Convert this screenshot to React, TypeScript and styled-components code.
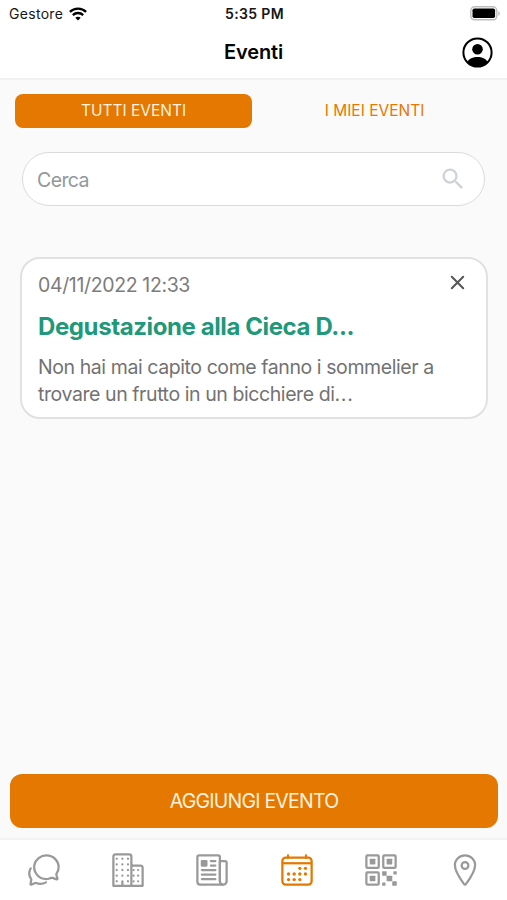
import React from 'react';
import styled, { createGlobalStyle } from 'styled-components';
import {
  IoBusinessOutline,
  IoCalendarOutline,
  IoChatbubblesOutline,
  IoLocationOutline,
  IoNewspaperOutline,
  IoQrCodeOutline,
} from 'react-icons/io5';
import { MdSearch } from 'react-icons/md';

const orange = '#e57800';

const GlobalStyle = createGlobalStyle`
  * { box-sizing: border-box; }
  body { margin: 0; background: #fafafa; font-family: Inter, "Liberation Sans", sans-serif; }
  button { font: inherit; border: 0; padding: 0; background: none; }
`;

const Screen = styled.div`
  width: 507px;
  height: 900px;
  display: flex;
  flex-direction: column;
  overflow: hidden;
  background: #fafafa;
`;

const Header = styled.header`
  height: 80px;
  flex: none;
  background: #fff;
  border-bottom: 2px solid #f1f1f1;
`;

const StatusBar = styled.div`
  height: 27px;
  padding: 0 7px 0 9px;
  display: grid;
  grid-template-columns: 1fr auto 1fr;
  align-items: center;
  color: #161616;
`;

const Carrier = styled.div`
  display: flex;
  align-items: center;
  gap: 6px;
  font-size: 14px;
  letter-spacing: 0.3px;
`;

const Clock = styled.div`
  font-size: 14px;
  font-weight: 600;
  letter-spacing: 0.35px;
`;

const Battery = styled.svg`
  justify-self: end;
`;

const TitleBar = styled.div`
  height: 51px;
  padding: 0 14px 0 44px;
  display: flex;
  align-items: center;
  justify-content: space-between;
`;

const Title = styled.h1`
  flex: 1;
  margin: -2px 0 0 1px;
  text-align: center;
  font-size: 20px;
  font-weight: 600;
  letter-spacing: -0.15px;
  color: #050505;
`;

const IconButton = styled.button`
  display: flex;
`;

const Tabs = styled.div`
  height: 34px;
  margin: 14px 15px 0;
  flex: none;
  display: grid;
  grid-template-columns: 237px 1fr;
  gap: 5px;
`;

const Tab = styled.button<{ $active?: boolean }>`
  padding-bottom: 2px;
  border-radius: 8px;
  font-size: 15.5px;
  letter-spacing: 0;
  background: ${(p) => (p.$active ? orange : 'transparent')};
  color: ${(p) => (p.$active ? '#fff3df' : orange)};
`;

const Search = styled.label`
  height: 54px;
  margin: 24px 22px 0 22px;
  padding: 0 17px 0 14px;
  flex: none;
  display: flex;
  align-items: center;
  border: 1.5px solid #d9dbdc;
  border-radius: 27px;
  background: #fff;
  color: #d0d3d6;
`;

const SearchInput = styled.input`
  flex: 1;
  min-width: 0;
  padding: 2px 0 0;
  border: 0;
  outline: 0;
  background: transparent;
  font: 400 19.5px Inter, "Liberation Sans", sans-serif;
  letter-spacing: -0.6px;
  &::placeholder { color: #92979c; opacity: 1; }
`;

const Card = styled.article`
  height: 162px;
  margin: 51px 19px 0 20px;
  padding: 13px 21px 0 16px;
  flex: none;
  border: 2px solid #e0e2e2;
  border-radius: 20px;
  background: #fff;
`;

const CardTop = styled.div`
  height: 26px;
  display: flex;
  justify-content: space-between;
  align-items: center;
`;

const CloseButton = styled(IconButton)`
  margin-bottom: 6px;
`;

const EventDate = styled.time`
  font-size: 19.5px;
  letter-spacing: -0.36px;
  color: #7c7c7c;
`;

const EventTitle = styled.h2`
  margin: 13px 0 0;
  font-size: 24px;
  line-height: 32px;
  font-weight: 700;
  letter-spacing: -0.4px;
  color: #20987a;
`;

const Summary = styled.p`
  margin: 11px 0 0;
  font-size: 19.5px;
  line-height: 27px;
  letter-spacing: -0.42px;
  color: #727272;
  white-space: nowrap;
`;

const Ellipsis = styled.span`
  letter-spacing: 0.7px;
`;

const AddButton = styled.button`
  height: 54px;
  margin: auto 9px 10px 10px;
  flex: none;
  border-radius: 12px;
  background: ${orange};
  color: #fff3df;
  font-size: 19.5px;
  letter-spacing: -0.77px;
`;

const TabBar = styled.nav`
  height: 62px;
  padding-left: 2px;
  flex: none;
  display: grid;
  grid-template-columns: repeat(6, 1fr);
  border-top: 2px solid #f2f2f2;
  background: #fff;
`;

const NavItem = styled.button<{ $active?: boolean }>`
  display: flex;
  justify-content: center;
  align-items: center;
  color: ${(p) => (p.$active ? orange : '#999999')};
`;

const navItems = [
  { label: 'Chat', Icon: IoChatbubblesOutline },
  { label: 'Aziende', Icon: IoBusinessOutline },
  { label: 'Notizie', Icon: IoNewspaperOutline },
  { label: 'Eventi', Icon: IoCalendarOutline },
  { label: 'Codice QR', Icon: IoQrCodeOutline },
  { label: 'Mappa', Icon: IoLocationOutline },
];

export default function App() {
  return (
    <>
      <GlobalStyle />
      <Screen>
        <Header>
          <StatusBar>
            <Carrier>
              Gestore
              <svg width="18" height="14" viewBox="0 0 18 14" fill="none" stroke="#000" strokeWidth="2.3">
                <path d="M.9 4.9C5.4.6 12.6.6 17.1 4.9M3.8 8.1c2.9-2.8 7.5-2.8 10.4 0" />
                <path d="M9 13.4 6.3 10.7c1.5-1.4 3.9-1.4 5.4 0Z" fill="#000" stroke="none" />
              </svg>
            </Carrier>
            <Clock>5:35 PM</Clock>
            <Battery width="30" height="15" viewBox="0 0 30 15">
              <rect x=".8" y=".8" width="26" height="13" rx="3.8" fill="#fff" stroke="#bdbdbd" strokeWidth="1.4" />
              <rect x="2.5" y="2.5" width="22.6" height="9.6" rx="1.8" />
              <path d="M28.3 5c2 .7 2 4.3 0 5Z" fill="#bdbdbd" />
            </Battery>
          </StatusBar>
          <TitleBar>
            <Title>Eventi</Title>
            <IconButton aria-label="Profilo">
              <svg width="31" height="31" viewBox="0 0 31 31">
                <circle cx="15.5" cy="15.5" r="14.1" fill="none" stroke="#000" strokeWidth="2" />
                <circle cx="15.5" cy="12.3" r="5.3" />
                <path d="M5.3 25.1c3-6.800 17.4-6.800 20.400 0-5.600 6.600-14.800 6.600-20.400 0Z" />
              </svg>
            </IconButton>
          </TitleBar>
        </Header>
        <Tabs>
          <Tab $active>TUTTI EVENTI</Tab>
          <Tab>I MIEI EVENTI</Tab>
        </Tabs>
        <Search>
          <SearchInput placeholder="Cerca" />
          <MdSearch size={28} />
        </Search>
        <Card>
          <CardTop>
            <EventDate>04/11/2022 12:33</EventDate>
            <CloseButton aria-label="Chiudi">
              <svg width="15" height="15" viewBox="0 0 15 15" stroke="#555" strokeWidth="2" strokeLinecap="round">
                <path d="m1.800 1.800 11.400 11.400m0-11.400-11.400 11.400" />
              </svg>
            </CloseButton>
          </CardTop>
          <EventTitle>Degustazione alla Cieca D...</EventTitle>
          <Summary>
            Non hai mai capito come fanno i sommelier a
            <br />
            trovare un frutto in un bicchiere di<Ellipsis>...</Ellipsis>
          </Summary>
        </Card>
        <AddButton>AGGIUNGI EVENTO</AddButton>
        <TabBar>
          {navItems.map(({ label, Icon }) => (
            <NavItem key={label} aria-label={label} $active={label === 'Eventi'}>
              <Icon size={36} />
            </NavItem>
          ))}
        </TabBar>
      </Screen>
    </>
  );
}
